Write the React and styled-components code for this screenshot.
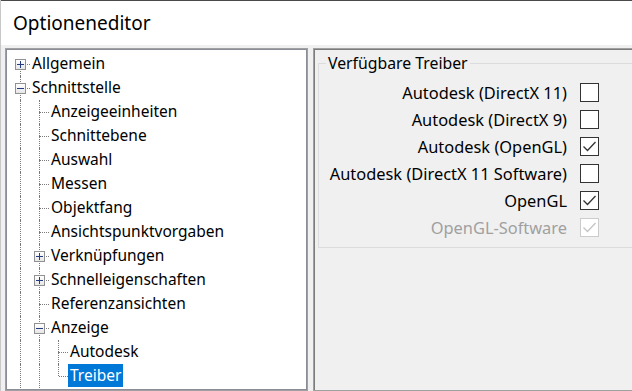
import React from 'react';
import styled, { createGlobalStyle } from 'styled-components';

const Global = createGlobalStyle`
  html, body { margin: 0; padding: 0; background: #f0f0f0; }
  body { width: 632px; height: 391px; overflow: hidden; font-family: "Noto Sans", "Open Sans", sans-serif; color: #000; }
  #root { width: 632px; height: 391px; }
`;

const Window = styled.div`
  width: 632px;
  height: 391px;
  box-sizing: border-box;
  display: flex;
  flex-direction: column;
  overflow: hidden;
  background: #f0f0f0;
  border-left: 1px solid #c8c8c8;
`;

const TitleBar = styled.div`
  flex: none;
  height: 45px;
  box-sizing: border-box;
  background: #fff;
  border-top: 1px solid #4a4a4a;
  display: flex;
  align-items: center;
  padding-left: 12px;
  font-size: 19px;
`;

const Body = styled.div`
  flex: 1;
  min-height: 0;
  display: flex;
  gap: 5px;
  padding: 3px 0 0 4px;
`;

const TreePanel = styled.div`
  flex: none;
  width: 303px;
  box-sizing: border-box;
  background: #fff;
  border: 1px solid #a0a0a0;
  box-shadow: inset 0 0 0 1px #8a8c98;
  padding: 3px 0 0 5px;
  font-size: 15.5px;
`;

const TreeRow = styled.div`
  display: flex;
  height: 24px;
`;

const Guide = styled.div`
  flex: none;
  width: 10px;
  height: 24px;
  margin-right: 9px;
  box-sizing: border-box;
  border-right: ${p => (p.$on ? '1px dotted #7a7a7a' : 'none')};
`;

const Connector = styled.div`
  flex: none;
  width: 19px;
  height: 24px;
  display: grid;
  grid-template-columns: 10px 9px;
  grid-template-rows: 12px 12px;
`;

const VHalf = styled.div`
  box-sizing: border-box;
  border-right: ${p => (p.$on ? '1px dotted #7a7a7a' : 'none')};
  grid-column: 1;
  grid-row: ${p => p.$row};
`;

const HLine = styled.div`
  grid-column: 2;
  grid-row: 2;
  border-top: 1px dotted #7a7a7a;
`;

const Expander = styled.div`
  grid-area: 1 / 1 / 3 / 3;
  justify-self: center;
  align-self: start;
  margin-top: 7px;
  width: 11px;
  height: 11px;
  box-sizing: border-box;
  border: 1px solid #919191;
  background: linear-gradient(#ffffff, #e6e6e6);
  display: flex;
  align-items: center;
  justify-content: center;
`;

const Label = styled.span`
  align-self: flex-start;
  height: 23px;
  line-height: 23px;
  padding: 0 2px;
  white-space: nowrap;
  background: ${p => (p.$selected ? '#0078d7' : 'transparent')};
  color: ${p => (p.$selected ? '#fff' : '#000')};
`;

const RightPanel = styled.div`
  flex: none;
  width: 340px;
  box-sizing: border-box;
  border: 1px solid #a0a0a0;
  box-shadow: inset 1px 1px 0 0 #7c7c7c;
  padding: 5px 3px 0 4px;
`;

const Group = styled.fieldset`
  margin: 0;
  padding: 7px 49px 6px 0;
  border: 1px solid #dcdcdc;
  min-inline-size: 0;
`;

const Legend = styled.legend`
  margin-left: 7px;
  padding: 0 2px;
  font-size: 15.8px;
  line-height: 18px;
`;

const DriverRow = styled.div`
  display: flex;
  justify-content: flex-end;
  align-items: center;
  gap: 13px;
  height: 27px;
  font-size: 16.4px;
  color: ${p => (p.$disabled ? '#a0a0a0' : '#000')};
`;

const CheckBox = styled.span`
  flex: none;
  width: 19px;
  height: 19px;
  box-sizing: border-box;
  border: 1px solid ${p => (p.$disabled ? '#cccccc' : '#333333')};
  background: #fff;
  display: flex;
`;

const Sign = ({ minus }) => (
  <svg width="9" height="9" viewBox="0 0 9 9">
    <path d="M1 4.5H8" stroke="#243a82" strokeWidth="1" />
    {!minus && <path d="M4.5 1V8" stroke="#243a82" strokeWidth="1" />}
  </svg>
);

const Check = ({ color }) => (
  <svg width="17" height="17" viewBox="1 1 17 17">
    <path d="M3.5 9.5L7.5 13.5L15.5 5" fill="none" stroke={color} strokeWidth="1.3" />
  </svg>
);

const tree = [
  { label: 'Allgemein', guides: [], exp: 'plus', top: false, bottom: true },
  { label: 'Schnittstelle', guides: [], exp: 'minus', top: true, bottom: true },
  { label: 'Anzeigeeinheiten', guides: [true], top: true, bottom: true },
  { label: 'Schnittebene', guides: [true], top: true, bottom: true },
  { label: 'Auswahl', guides: [true], top: true, bottom: true },
  { label: 'Messen', guides: [true], top: true, bottom: true },
  { label: 'Objektfang', guides: [true], top: true, bottom: true },
  { label: 'Ansichtspunktvorgaben', guides: [true], top: true, bottom: true },
  { label: 'Verknüpfungen', guides: [true], exp: 'plus', top: true, bottom: true },
  { label: 'Schnelleigenschaften', guides: [true], exp: 'plus', top: true, bottom: true },
  { label: 'Referenzansichten', guides: [true], top: true, bottom: true },
  { label: 'Anzeige', guides: [true], exp: 'minus', top: true, bottom: true },
  { label: 'Autodesk', guides: [true, true], top: true, bottom: true },
  { label: 'Treiber', guides: [true, true], top: true, bottom: false, selected: true },
];

const drivers = [
  { label: 'Autodesk (DirectX 11)', checked: false },
  { label: 'Autodesk (DirectX 9)', checked: false },
  { label: 'Autodesk (OpenGL)', checked: true },
  { label: 'Autodesk (DirectX 11 Software)', checked: false },
  { label: 'OpenGL', checked: true },
  { label: 'OpenGL-Software', checked: true, disabled: true },
];

export default function App() {
  return (
    <>
      <Global />
      <Window>
        <TitleBar>Optioneneditor</TitleBar>
        <Body>
          <TreePanel>
            {tree.map(item => (
              <TreeRow key={item.label}>
                {item.guides.map((g, i) => (
                  <Guide key={i} $on={g} />
                ))}
                <Connector>
                  <VHalf $row={1} $on={item.top} />
                  <VHalf $row={2} $on={item.bottom} />
                  <HLine />
                  {item.exp && (
                    <Expander>
                      <Sign minus={item.exp === 'minus'} />
                    </Expander>
                  )}
                </Connector>
                <Label $selected={item.selected}>{item.label}</Label>
              </TreeRow>
            ))}
          </TreePanel>
          <RightPanel>
            <Group>
              <Legend>Verfügbare Treiber</Legend>
              {drivers.map(d => (
                <DriverRow key={d.label} $disabled={d.disabled}>
                  <span>{d.label}</span>
                  <CheckBox $disabled={d.disabled}>
                    {d.checked && <Check color={d.disabled ? '#c4c4c4' : '#333333'} />}
                  </CheckBox>
                </DriverRow>
              ))}
            </Group>
          </RightPanel>
        </Body>
      </Window>
    </>
  );
}
